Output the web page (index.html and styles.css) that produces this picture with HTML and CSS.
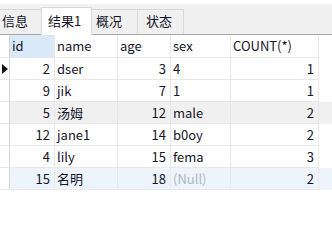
FILE: index.html
```html
<!DOCTYPE html>
<html>
<head>
<meta charset="utf-8">
<link rel="stylesheet" href="styles.css">
</head>
<body>
<div class="app">
  <div class="tabbar">
    <div class="tab tab-first">信息</div>
    <div class="tab tab-active">结果1</div>
    <div class="tab tab-mid">概况</div>
    <div class="tab tab-last">状态</div>
  </div>
  <div class="grid">
    <div class="row head">
      <div class="c ind"></div>
      <div class="c cid sel">id</div>
      <div class="c cname">name</div>
      <div class="c cage">age</div>
      <div class="c csex">sex</div>
      <div class="c ccnt">COUNT(*)</div>
    </div>
    <div class="row">
      <div class="c ind"><span class="arrow"></span></div>
      <div class="c cid num">2</div>
      <div class="c cname">dser</div>
      <div class="c cage num">3</div>
      <div class="c csex">4</div>
      <div class="c ccnt num">1</div>
    </div>
    <div class="row">
      <div class="c ind"></div>
      <div class="c cid num">9</div>
      <div class="c cname">jik</div>
      <div class="c cage num">7</div>
      <div class="c csex">1</div>
      <div class="c ccnt num">1</div>
    </div>
    <div class="row hover">
      <div class="c ind"></div>
      <div class="c cid num">5</div>
      <div class="c cname">汤姆</div>
      <div class="c cage num">12</div>
      <div class="c csex">male</div>
      <div class="c ccnt num">2</div>
    </div>
    <div class="row">
      <div class="c ind"></div>
      <div class="c cid num">12</div>
      <div class="c cname">jane1</div>
      <div class="c cage num">14</div>
      <div class="c csex">b0oy</div>
      <div class="c ccnt num">2</div>
    </div>
    <div class="row">
      <div class="c ind"></div>
      <div class="c cid num">4</div>
      <div class="c cname">lily</div>
      <div class="c cage num">15</div>
      <div class="c csex">fema</div>
      <div class="c ccnt num">3</div>
    </div>
    <div class="row current">
      <div class="c ind"></div>
      <div class="c cid num">15</div>
      <div class="c cname">名明</div>
      <div class="c cage num">18</div>
      <div class="c csex null">(Null)</div>
      <div class="c ccnt num">2</div>
    </div>
  </div>
</div>
</body>
</html>
```
FILE: styles.css
```css
html, body {
  margin: 0;
  padding: 0;
  background: #ffffff;
}
.app {
  width: 332px;
  height: 206px;
  overflow: hidden;
  font-family: "Noto Sans CJK SC", "Noto Sans", sans-serif;
  font-size: 13px;
  color: #14142a;
}
.tabbar {
  margin-top: 4px;
  height: 30px;
  background: #f0f0f0;
  border-bottom: 1px solid #a8a8a8;
  display: flex;
  align-items: flex-end;
}
.tab {
  box-sizing: border-box;
  height: 25px;
  line-height: 22px;
  border: 1px solid #d9d9d9;
  border-bottom: none;
  background: #f0f0f0;
  padding-left: 5px;
  margin-right: -1px;
}
.tab-first { width: 42px; padding-left: 2px; border-left: none; }
.tab-active {
  width: 51px;
  line-height: 25px;
  background: #ffffff;
  padding-left: 6px;
  position: relative;
  z-index: 1;
  margin-bottom: -1px;
  height: 28px;
}
.tab-mid { width: 47px; padding-left: 4px; }
.tab-last { width: 47px; padding-left: 8px; }
.grid {
  display: flex;
  flex-direction: column;
}
.row {
  display: flex;
  height: 22px;
}
.row.head { height: 23px; }
.row.hover { background: #f0f0f0; }
.row.current { background: #edf4fc; }
.c {
  box-sizing: border-box;
  border-right: 1px solid #e8e8e8;
  border-bottom: 1px solid #e8e8e8;
  padding: 0 3px 0 2px;
  line-height: 21px;
  white-space: nowrap;
  overflow: hidden;
}
.head .c { line-height: 22px; }
.ind {
  width: 10px;
  padding: 0;
  position: relative;
  background: #ffffff;
  border-right-color: #d6d6d6;
}
.cid { width: 45px; }
.cname { width: 63px; }
.cage { width: 53px; }
.csex { width: 60px; }
.ccnt { width: 88px; }
.sel { background: #d9e9f8; }
.num { text-align: right; padding-right: 4px; }
.null { color: #b4b4c4; }
.arrow {
  position: absolute;
  left: 2px;
  top: 6px;
  width: 0;
  height: 0;
  border-top: 5px solid transparent;
  border-bottom: 5px solid transparent;
  border-left: 6px solid #111;
}
```
